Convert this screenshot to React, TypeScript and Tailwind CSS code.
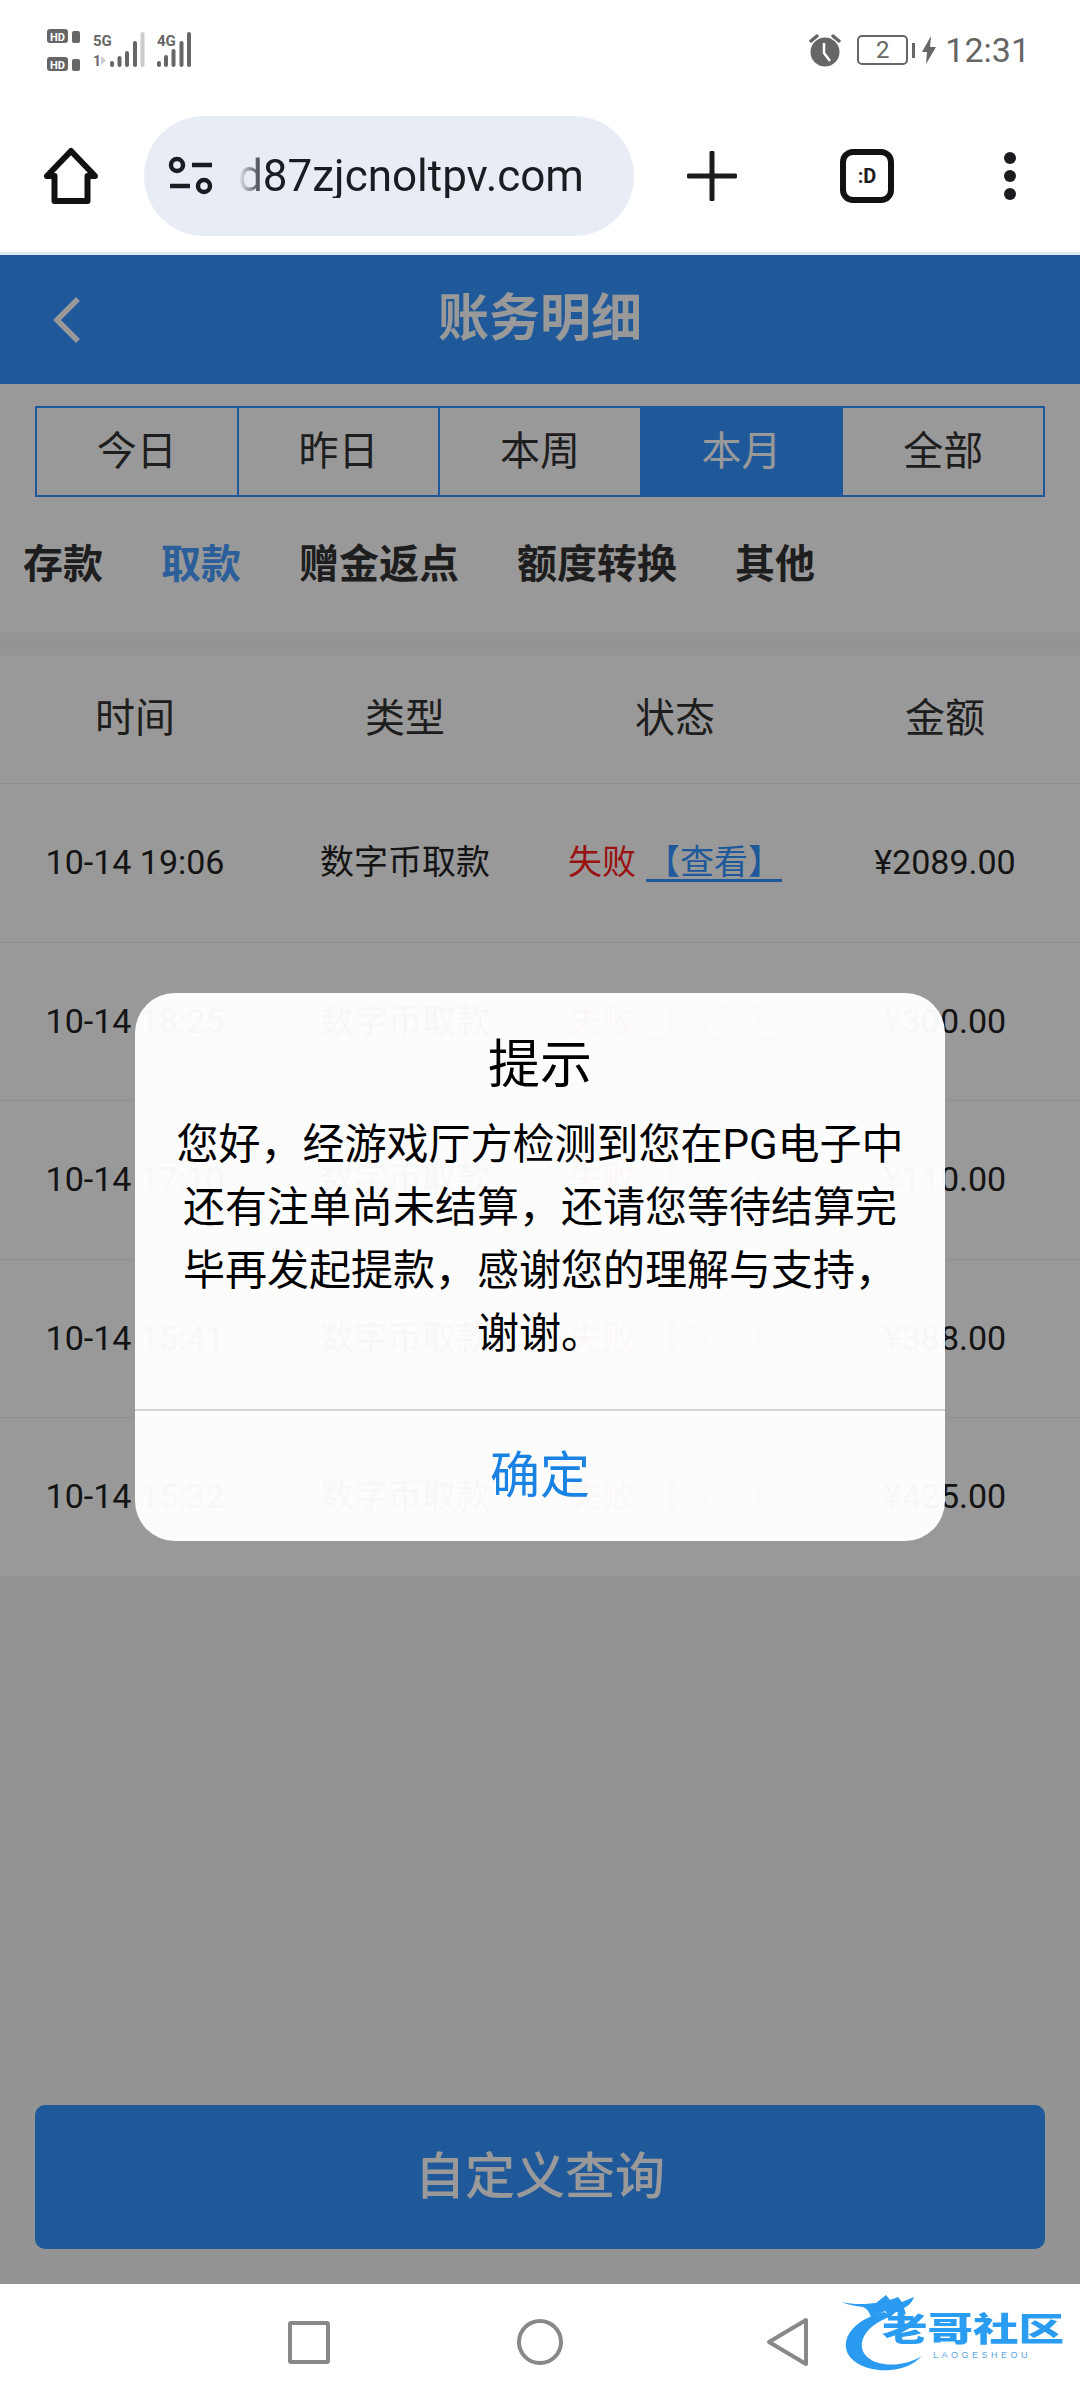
const tabs = ["今日", "昨日", "本周", "本月", "全部"]
const subTabs = ["存款", "取款", "赠金返点", "额度转换", "其他"]
const rows = [
  { time: "10-14 19:06", amount: "¥2089.00" },
  { time: "10-14 18:25", amount: "¥300.00" },
  { time: "10-14 17:10", amount: "¥110.00" },
  { time: "10-14 15:41", amount: "¥388.00" },
  { time: "10-14 15:32", amount: "¥425.00" },
]

const StatusBar = () => (
  <div className="h-[100px] flex justify-between items-center pl-[47px] pr-[50px] text-[#666]">
    <svg width="170" height="50" viewBox="0 0 170 50" className="text-[#666]">
      <rect x="0" y="4" width="21" height="14" rx="3" fill="currentColor" />
      <text x="10.5" y="15.5" textAnchor="middle" fontSize="11" fontWeight="700" fill="#fff" fontFamily="Roboto, sans-serif">HD</text>
      <rect x="25" y="6" width="8" height="12" rx="2" fill="currentColor" />
      <rect x="0" y="32" width="21" height="14" rx="3" fill="currentColor" />
      <text x="10.5" y="43.5" textAnchor="middle" fontSize="11" fontWeight="700" fill="#fff" fontFamily="Roboto, sans-serif">HD</text>
      <rect x="25" y="34" width="8" height="12" rx="2" fill="currentColor" />
      <text x="46" y="21" fontSize="15" fontWeight="700" fill="currentColor" fontFamily="Roboto, sans-serif">5G</text>
      <text x="46" y="41" fontSize="14" fontWeight="700" fill="currentColor" fontFamily="Roboto, sans-serif">1</text>
      <path d="M54 31v9l5-4.500z" fill="#ccc" />
      <g stroke="currentColor" strokeWidth="4" strokeLinecap="round">
        <path d="M65 38v2M72.500 33v7M80 28v12M88 18v22" />
        <path d="M95.500 9v31" stroke="#ccc" />
        <path d="M112 38v2M119 32v8M126.500 26v14M134.500 18v22M142 9v31" />
      </g>
      <text x="110" y="21" fontSize="15" fontWeight="700" fill="currentColor" fontFamily="Roboto, sans-serif">4G</text>
    </svg>
    <div className="flex items-center">
      <svg width="32" height="34" viewBox="0 0 32 34" className="mr-[16px]">
        <circle cx="16" cy="19" r="14.500" fill="#666" />
        <path d="M15 10v10l6 8" fill="none" stroke="#fff" strokeWidth="2.500" />
        <path d="M2 8l6-5M30 8l-6-5" stroke="#666" strokeWidth="3.500" strokeLinecap="round" />
      </svg>
      <div className="w-[51px] h-[30px] rounded-[5px] border-[2.500px] border-[#666] flex items-center justify-center text-[24px] font-['Roboto',sans-serif]">2</div>
      <div className="w-[3px] h-[15px] bg-[#666] ml-[4px] mr-[7px]" />
      <svg width="14" height="28" viewBox="0 0 14 28" className="mr-[9px]">
        <path d="M9 0L0 16h5l-1 12 10-17H8z" fill="#666" />
      </svg>
      <span className="text-[34px] leading-none font-['Roboto',sans-serif]">12:31</span>
    </div>
  </div>
)

const BrowserBar = () => (
  <div className="h-[152px] flex items-center text-[#1a1c20] bg-white">
    <svg width="60" height="60" viewBox="0 0 60 60" fill="none" stroke="#111" strokeWidth="6" strokeLinejoin="round" className="ml-[41px] mr-[44px] shrink-0">
      <path d="M30 5L6 30h7.500v25h33V30H54z" />
    </svg>
    <div className="w-[490px] h-[120px] rounded-full bg-[#e8edf5] flex items-center shrink-0 ml-[-1px]">
      <svg width="46" height="40" viewBox="0 0 46 40" fill="none" stroke="#1a1c20" strokeWidth="4.500" className="ml-[24px] shrink-0">
        <circle cx="9" cy="9" r="6" />
        <path d="M24 9h20M2 30h20" />
        <circle cx="36" cy="30" r="6" />
      </svg>
      <div className="ml-[24px] w-[375px] overflow-hidden whitespace-nowrap text-[44px] leading-none font-['Roboto',sans-serif] [mask-image:linear-gradient(to_right,transparent,black_28px)]">
        d87zjcnoltpv.com
      </div>
    </div>
    <svg width="50" height="50" viewBox="0 0 50 50" stroke="#1a1c20" strokeWidth="5" strokeLinecap="round" className="ml-[53px] shrink-0">
      <path d="M25 2v46M2 25h46" />
    </svg>
    <div className="ml-[103px] w-[54px] h-[54px] rounded-[13px] border-[6px] border-[#111] flex items-center justify-center text-[20px] font-bold font-['Roboto',sans-serif] shrink-0">
      :D
    </div>
    <div className="ml-[110px] flex flex-col gap-[6px] shrink-0">
      <div className="w-[12px] h-[12px] rounded-full bg-[#1a1c20]" />
      <div className="w-[12px] h-[12px] rounded-full bg-[#1a1c20]" />
      <div className="w-[12px] h-[12px] rounded-full bg-[#1a1c20]" />
    </div>
  </div>
)

const NavBar = () => (
  <div className="relative h-[116px] bg-white flex items-center">
    <div className="ml-[288px] w-[42px] h-[43px] border-[4px] border-[#888] rounded-[3px]" />
    <div className="ml-[187px] w-[46px] h-[46px] border-[4px] border-[#888] rounded-full" />
    <svg width="44" height="50" viewBox="0 0 44 50" fill="none" stroke="#888" strokeWidth="4" strokeLinejoin="round" className="ml-[203px]">
      <path d="M40 3v44L3 25z" />
    </svg>
    <div className="absolute left-[842px] top-[4px] w-[226px] h-[90px]">
      <svg width="120" height="90" viewBox="0 0 120 90" className="absolute left-0 top-0" fill="#2a9bf0">
        <path d="M42 24C18 30 2 44 4 60c2 14 22 24 44 22 14-1 24-6 32-14-12 7-26 10-38 8-14-2-24-10-22-22 2-10 12-20 30-26z" />
        <path d="M0 14c12 3 24 2 34 1l10-8 4 5 8-3 4 5 12-5c-2 6-6 9-10 11l2 6-10-2-6 5-5-6-14 6c-2-6-4-8-8-10C14 18 6 17 0 14z" />
      </svg>
      <div className="absolute left-[40px] top-[19px] text-[33px] leading-[40px] font-black whitespace-nowrap origin-left scale-x-[1.38] font-['Noto_Sans_CJK_SC',sans-serif] text-[#2a9df2]">
        老哥社区
      </div>
      <div className="absolute left-[91px] top-[61px] text-[9px] leading-[12px] tracking-[3.500px] whitespace-nowrap font-['Liberation_Sans',sans-serif] text-[#5aa5e0]">
        LAOGESHEOU
      </div>
    </div>
  </div>
)

const Dialog = () => (
  <div className="w-[810px] rounded-[40px] bg-white/[0.97] text-black text-center mb-[5px]">
    <div className="pt-[40px] px-[40px] pb-[44px]">
      <div className="text-[52px] leading-[66px]">提示</div>
      <p className="mt-[14px] text-[42px] leading-[63px]">
        您好，经游戏厅方检测到您在PG电子中还有注单尚未结算，还请您等待结算完毕再发起提款，感谢您的理解与支持，谢谢。
      </p>
    </div>
    <div className="h-[132px] border-t-2 border-[#d4d4d4] flex items-center justify-center text-[50px] text-[#1a82e2]">
      确定
    </div>
  </div>
)

export default function App() {
  return (
    <div className="w-[1080px] h-[2400px] flex flex-col bg-white overflow-hidden font-['Roboto','Noto_Sans_CJK_SC',sans-serif]">
      <StatusBar />
      <BrowserBar />
      <div className="h-[3px] bg-[#dbe8f5]" />

      <div className="relative flex-1 flex flex-col bg-[#f5f7f6] text-[#333]">
        <div className="h-[129px] bg-[#3494ff] relative flex items-center justify-center text-white">
          <svg width="30" height="46" viewBox="0 0 30 46" fill="none" stroke="#fff" strokeWidth="5.500" className="absolute left-[52px] top-[42px]">
            <path d="M26 2L5 23l21 21" />
          </svg>
          <span className="text-[51px] font-bold">账务明细</span>
        </div>

        <div className="bg-white">
          <div className="mx-[35px] mt-[22px] h-[91px] flex border-2 border-[#3494ff]">
            {tabs.map((t, i) => (
              <div
                key={t}
                className={`flex-1 flex items-center justify-center text-[40px] ${i > 0 ? "border-l-2 border-[#3494ff]" : ""} ${t === "本月" ? "bg-[#3494ff] text-white" : ""}`}
              >
                {t}
              </div>
            ))}
          </div>
          <div className="h-[136px] flex items-center gap-[58px] pl-[23px] text-[40px] font-bold">
            {subTabs.map((t) => (
              <span key={t} className={t === "取款" ? "text-[#4a9dff]" : ""}>
                {t}
              </span>
            ))}
          </div>
        </div>

        <div className="h-[22px]" />

        <div className="bg-white">
          <div className="grid grid-cols-4 h-[129px] items-center text-center text-[40px] border-b border-[#eee]">
            <span>时间</span>
            <span>类型</span>
            <span>状态</span>
            <span>金额</span>
          </div>
          {rows.map((r) => (
            <div key={r.time} className="grid grid-cols-4 h-[158.500px] items-center text-center text-[34px] border-b border-[#eee] text-[#222]">
              <span>{r.time}</span>
              <span>数字币取款</span>
              <span className="whitespace-nowrap">
                <span className="text-[#ff2020]">失败</span>
                <span className="ml-[10px] text-[#3494ff] underline decoration-[3px] underline-offset-[5px]">【查看】</span>
              </span>
              <span>{r.amount}</span>
            </div>
          ))}
        </div>

        <div className="mt-auto mx-[35px] mb-[35px] h-[144px] rounded-[10px] bg-[#3494ff] flex items-center justify-center text-white text-[50px] font-medium">
          自定义查询
        </div>

        <div className="absolute inset-0 bg-black/40 flex items-center justify-center">
          <Dialog />
        </div>
      </div>

      <NavBar />
    </div>
  )
}
